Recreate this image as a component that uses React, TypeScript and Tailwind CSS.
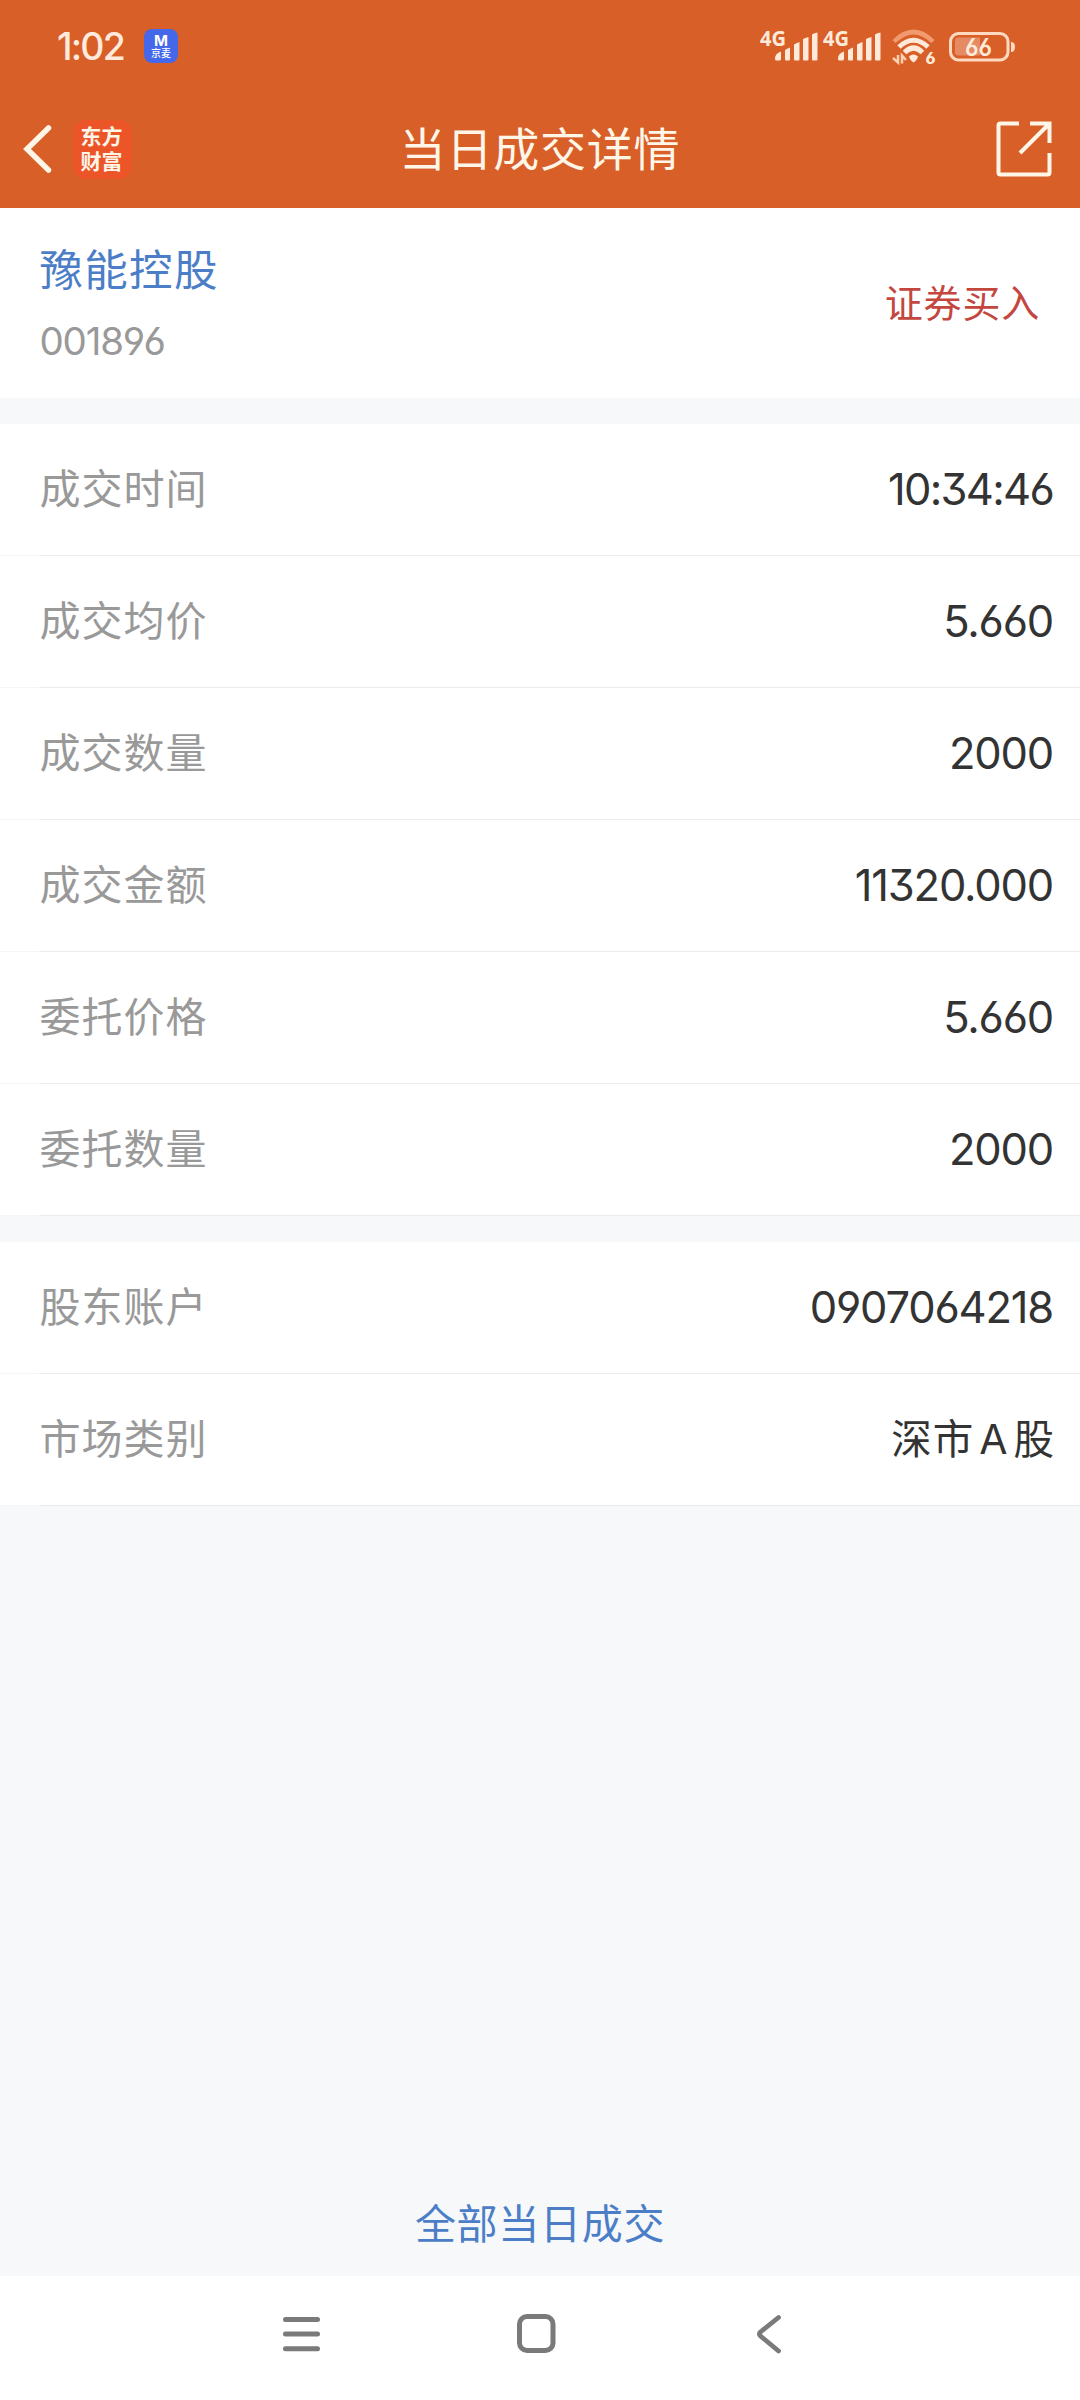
import React from "react";

const LATIN = "font-['Inter','Noto_Sans_CJK_SC',sans-serif] [font-feature-settings:'cv03','cv04','cv09']";
const CJK = "font-['Noto_Sans_CJK_SC',sans-serif]";

function Signal() {
  return (
    <svg className="overflow-visible" width="58" height="36" viewBox="0 0 58 36" fill="#ffe9d8">
      <text x="0" y="17.5" fontSize="21" fontWeight="700" textLength="26" lengthAdjust="spacingAndGlyphs" fontFamily="'Noto Sans', sans-serif">
        4G
      </text>
      <path d="M15 31q0-5 6-7v7q0 2-1 2h-4q-1 0-1-2zM25 22.500q2-1.500 5-2.500v11.500q0 1.500-1 1.500h-3q-1 0-1-1.500zM34 17q2-1.500 5.500-2.500v17q0 1.500-1 1.500h-3.500q-1 0-1-1.500zM43 11.500q2-1 5.500-2v22q0 1.500-1 1.500h-3.500q-1 0-1-1.500zM52 7q2-1.500 5.500-2v26.500q0 1.500-1 1.500h-3.500q-1 0-1-1.500z" transform="translate(0 -.5)" />
    </svg>
  );
}

function Wifi() {
  return (
    <svg className="overflow-visible" width="44" height="36" viewBox="0 0 44 36" fill="none">
      <path d="M2 13.500Q21.500-5.500 41 13.500" stroke="#f19a70" strokeWidth="4.500" />
      <path d="M7 19Q21.500 5.500 36 19" stroke="#ffe9d8" strokeWidth="5" />
      <path d="M12.500 24.500Q21.500 15.500 30.500 24.500" stroke="#ffe9d8" strokeWidth="5" />
      <path d="M17 28.500Q21.500 24.500 26 28.500Q24.500 33 21.500 34.500Q18.500 33 17 28.500Z" fill="#ffe9d8" />
      <path d="M6 27v7.500L1 30M10 35.500v-8l4 4.500" stroke="#ffd0b0" strokeWidth="2.500" />
      <text x="33.500" y="35.500" fontSize="16" fontWeight="800" fontFamily="Inter, sans-serif" fill="#ffe9d8" style={{ fontFeatureSettings: "'cv03'" }}>
        6
      </text>
    </svg>
  );
}

function Battery() {
  return (
    <svg className="overflow-visible" width="66" height="30" viewBox="0 0 66 30" fill="none">
      <rect x="1.500" y="1.500" width="57.500" height="26.500" rx="8" stroke="#ffd9c0" strokeWidth="3" />
      <path d="M9 5.500h22v18H9q-3 0-3-3v-12q0-3 3-3z" fill="#e58a62" />
      <path d="M62 10q4 0 4 5t-4 5z" fill="#ffd9c0" />
      <text x="16" y="23.700" fontSize="24" fontWeight="600" textLength="27" lengthAdjust="spacingAndGlyphs" fontFamily="Inter, sans-serif" fill="#ffeadb" style={{ fontFeatureSettings: "'cv03'" }}>
        66
      </text>
    </svg>
  );
}

function StatusBar() {
  return (
    <div className="flex h-[92px] items-center pr-[65px] pl-[57px]">
      <span className={`${LATIN} mt-px w-[68px] text-[37.5px] leading-none font-medium tracking-[-1.8px] text-[#ffeadb]`}>1:02</span>
      <div className={`${CJK} ml-[19px] flex size-[34px] flex-col items-center rounded-[8px] bg-[#4568ea] text-white`}>
        <span className="mt-[4px] font-['Inter',sans-serif] text-[15px] leading-[15px] font-bold">M</span>
        <span className="text-[10px] leading-[10px] font-medium">京麦</span>
      </div>
      <div className="ml-auto flex">
        <Signal />
        <div className="ml-[5px]">
          <Signal />
        </div>
        <div className="ml-[11px]">
          <Wifi />
        </div>
        <div className="mt-[4px] ml-[13px]">
          <Battery />
        </div>
      </div>
    </div>
  );
}

function TitleBar() {
  return (
    <div className="relative flex h-[116px] items-center justify-between pr-[28px] pb-[2px] pl-[23px] text-[#fff6e8]">
      <div className="flex items-center">
        <svg width="30" height="50" viewBox="0 0 30 50" fill="none" stroke="currentColor" strokeWidth="5.500" strokeLinecap="round" strokeLinejoin="miter">
          <path d="M25.500 4L4 25l21.500 21" />
        </svg>
        <div className={`${CJK} ml-[20px] grid size-[59px] content-start justify-center rounded-[13px] bg-[#eb5528] pt-[3px] pr-[2px] text-[21px] leading-[25px] font-bold`}>
          <span>东方</span>
          <span>财富</span>
        </div>
      </div>
      <h1 className={`${CJK} absolute inset-x-0 top-[20px] text-center text-[46px] leading-[68px] tracking-[0.8px]`}>当日成交详情</h1>
      <svg width="56" height="56" viewBox="0 0 56 56" fill="none" stroke="currentColor" strokeWidth="4">
        <path d="M23 2.500H4.500q-2 0-2 2v47q0 2 2 2h47q2 0 2-2V32M34 2.500h19.500V22M53 3L24 32" />
      </svg>
    </div>
  );
}

function Row({ label, children }: { label: string; children: React.ReactNode }) {
  return (
    <div className="relative flex h-[132px] items-center justify-between bg-white pr-[26px] pl-[39.5px]">
      <span className={`${CJK} -mt-[7px] text-[41px] leading-none tracking-[1px] text-[#999]`}>{label}</span>
      {children}
      <div className="absolute right-0 bottom-0 left-[39px] h-px bg-[#ebebeb]" />
      <div className="absolute bottom-0 left-0 h-px w-[39px] bg-[#f7f7f7]" />
    </div>
  );
}

function Num({ children }: { children: string }) {
  const tracking = children.includes(":") ? "tracking-[-1.7px]" : "tracking-[-1.2px]";
  return <span className={`${LATIN} ${tracking} mr-px text-[43.5px] leading-none text-[#333]`}>{children}</span>;
}

function NavBar() {
  return (
    <div className="flex h-[124px] items-start bg-white pt-[38px] pl-[283px]">
      <svg width="37" height="40" viewBox="0 0 37 40" stroke="#7a7a7a" strokeWidth="5" strokeLinecap="round">
        <path d="M2.500 5.500h32M2.500 20h32M2.500 34.700h32" />
      </svg>
      <svg className="ml-[197px]" width="39" height="40" viewBox="0 0 39 40" fill="none">
        <rect x="2.500" y="2.500" width="33.500" height="34" rx="7.500" stroke="#7a7a7a" strokeWidth="5" />
      </svg>
      <svg className="ml-[201px]" width="26" height="40" viewBox="0 0 26 40" fill="none" stroke="#7a7a7a" strokeWidth="4.800" strokeLinecap="round">
        <path d="M21.500 3.500L3.500 18q-2 2 0 4l18 15" />
      </svg>
    </div>
  );
}

export default function App() {
  return (
    <div className="flex h-[2400px] w-[1080px] flex-col bg-[#f6f8fa]">
      <header className="h-[208px] bg-[#d85f28]">
        <StatusBar />
        <TitleBar />
      </header>
      <section className="flex h-[190px] items-center justify-between bg-white pr-[40px] pl-[39.5px]">
        <div>
          <div className={`${CJK} text-[43.5px] leading-[62px] tracking-[1.3px] text-[#4c7ec8]`}>豫能控股</div>
          <div className={`${LATIN} mt-[14px] text-[38.5px] leading-[56px] tracking-[-1.2px] text-[#999]`}>001896</div>
        </div>
        <span className={`${CJK} -mt-[4px] text-[38px] leading-none tracking-[0.8px] text-[#c4473f]`}>证券买入</span>
      </section>
      <section className="mt-[26px]">
        <Row label="成交时间">
          <Num>10:34:46</Num>
        </Row>
        <Row label="成交均价">
          <Num>5.660</Num>
        </Row>
        <Row label="成交数量">
          <Num>2000</Num>
        </Row>
        <Row label="成交金额">
          <Num>11320.000</Num>
        </Row>
        <Row label="委托价格">
          <Num>5.660</Num>
        </Row>
        <Row label="委托数量">
          <Num>2000</Num>
        </Row>
      </section>
      <section className="mt-[26px]">
        <Row label="股东账户">
          <Num>0907064218</Num>
        </Row>
        <Row label="市场类别">
          <span className={`${CJK} -mt-[3px] text-[40.5px] leading-none text-[#333]`}>
            深<span className="ml-px">市</span>
            <span className="mr-[6px] ml-[6px] font-['Inter',sans-serif] text-[41px]">A</span>股
          </span>
        </Row>
      </section>
      <div className={`${CJK} mt-auto mb-[25.5px] text-center text-[41px] leading-[60px] tracking-[0.7px] text-[#4c7ec8]`}>全部当日成交</div>
      <NavBar />
    </div>
  );
}
